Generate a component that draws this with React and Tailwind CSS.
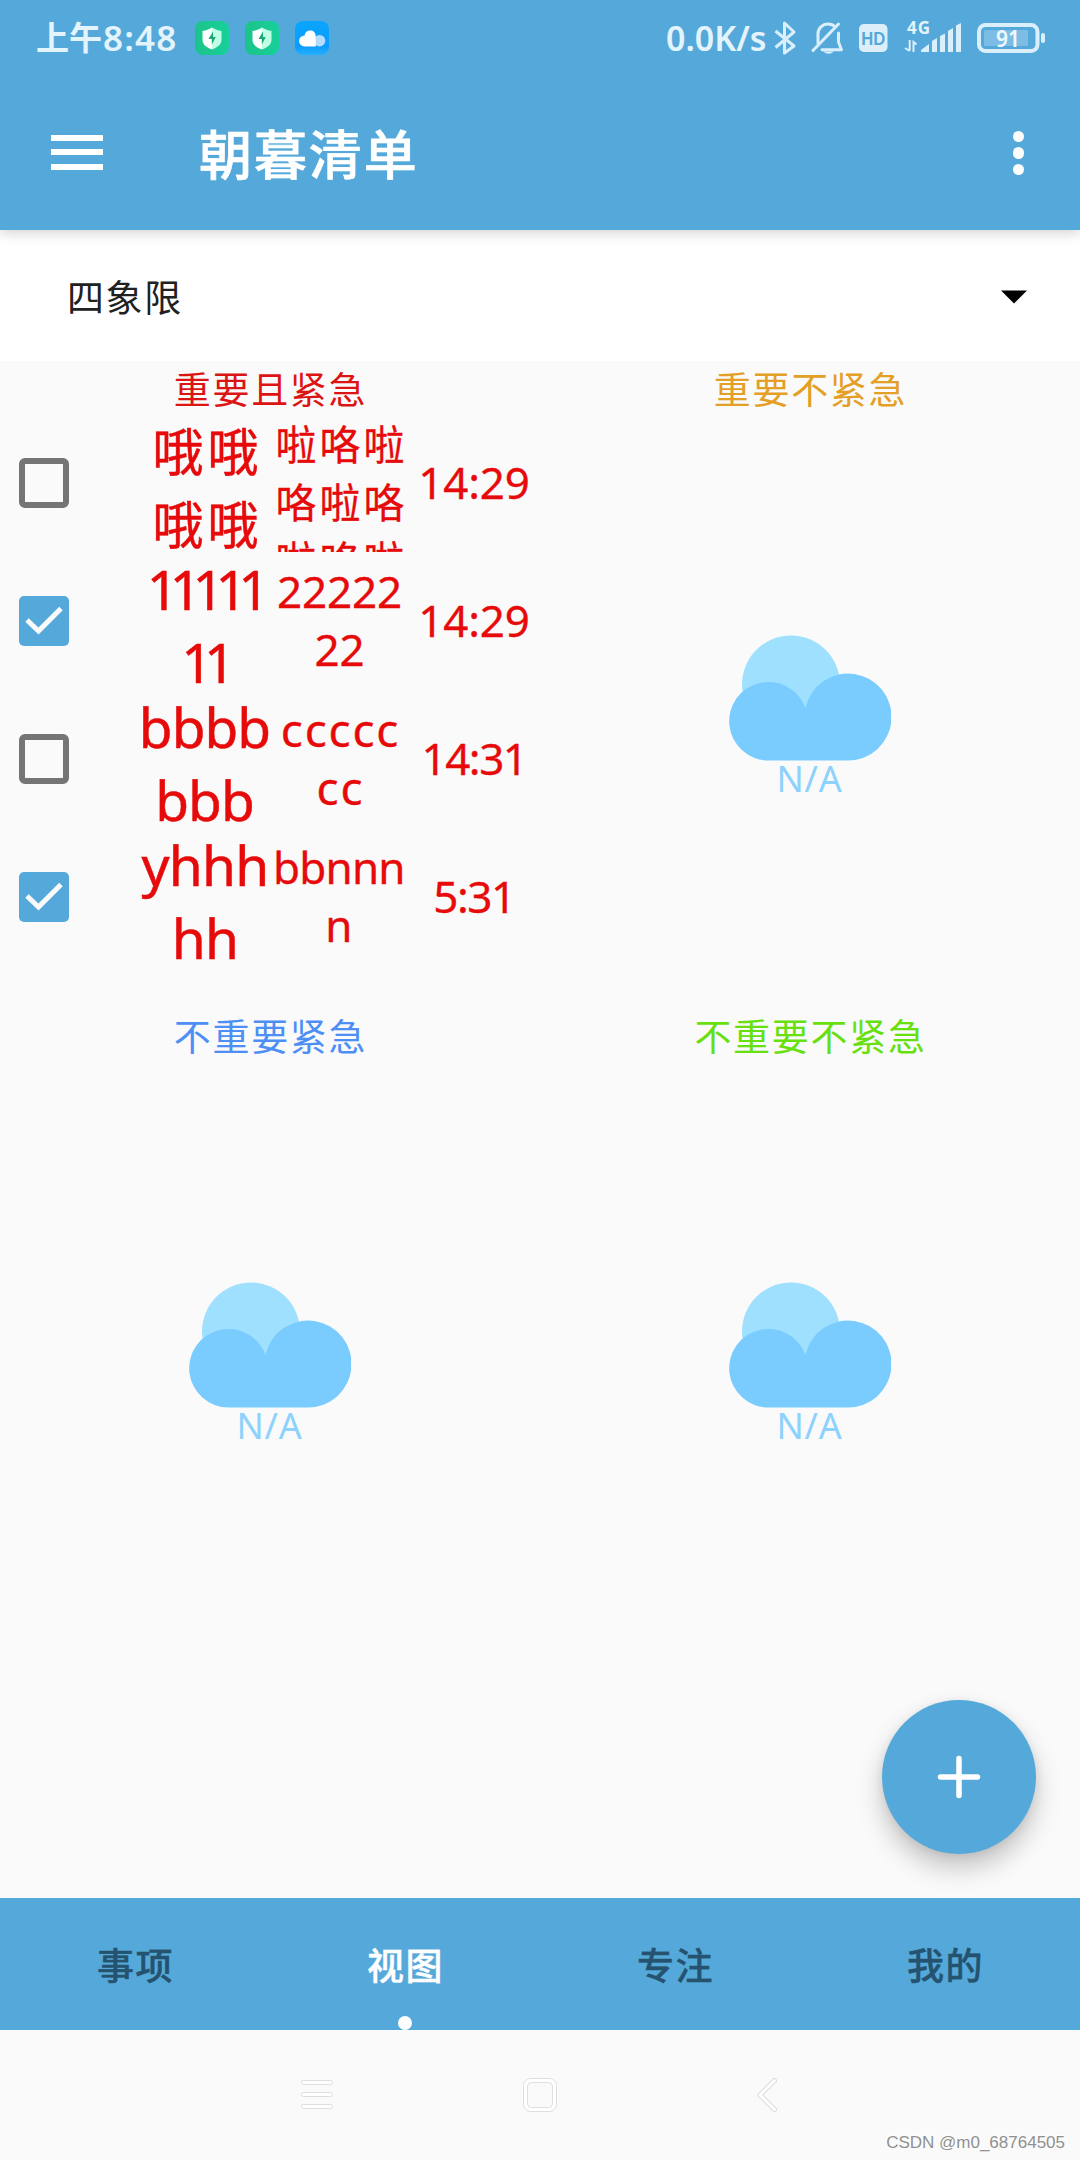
import React from 'react';

const tasks = [
    { done: false, title: '哦哦\n哦哦', titleClass: 'pl-[4px] pt-[1px] text-[51px] tracking-[4px]', note: '啦咯啦\n咯啦咯\n啦咯啦', noteClass: 'pl-[2px] pt-[1px] text-[41px] tracking-[3px]', time: '14:29', timeClass: 'tracking-[-0.2px]' },
    { done: true, title: '11111\n11', titleClass: 'pr-[3px] text-[55px] tracking-[-8.6px]', note: '22222\n22', noteClass: 'pr-[2px] pt-[10px] text-[44px] tracking-[-0.2px]', time: '14:29', timeClass: 'tracking-[-0.2px]' },
    { done: false, title: 'bbbb\nbbb', titleClass: 'pr-[2px] text-[55px] tracking-[-1px]', note: 'ccccc\ncc', noteClass: 'pt-[10px] text-[46px] tracking-[1.8px]', time: '14:31', timeClass: 'tracking-[-1.5px]' },
    { done: true, title: 'yhhh\nhh', titleClass: 'pr-[1px] text-[55px] tracking-[-0.8px]', note: 'bbnnn\nn', noteClass: 'pr-[4px] pt-[10px] text-[44px] tracking-[-0.8px]', time: '5:31', timeClass: 'tracking-[-1.5px]' },
];

const tabs = ['事项', '视图', '专注', '我的'];

function ShieldIcon() {
    return (
        <svg width="34" height="34" viewBox="0 0 34 34">
            <defs>
                <linearGradient id="shieldBg" x1="0" y1="0" x2="1" y2="0">
                    <stop offset="0" stopColor="#1cc38a" />
                    <stop offset="1" stopColor="#17d09a" />
                </linearGradient>
            </defs>
            <rect width="34" height="34" rx="8" fill="url(#shieldBg)" />
            <path d="M17 6.500C14 8.500 11 9.500 7.500 10V19C7.500 23.500 11.500 26.500 17 28.500Z" fill="#fff" />
            <path d="M17 6.500C20 8.500 23 9.500 26.500 10V19C26.500 23.500 22.500 26.500 17 28.500Z" fill="#bfffe4" />
            <path d="M18 10.500L13.500 18H16.800V23.500L20.800 16H18Z" fill="#1aa978" />
        </svg>
    );
}

function CloudAppIcon() {
    return (
        <svg width="34" height="34" viewBox="0 0 34 34">
            <defs>
                <linearGradient id="cloudBg" x1="0" y1="0" x2="0" y2="1">
                    <stop offset="0" stopColor="#0aa5ff" />
                    <stop offset="0.75" stopColor="#0b9cfb" />
                    <stop offset="1" stopColor="#27b0ff" />
                </linearGradient>
            </defs>
            <rect width="34" height="34" rx="8" fill="url(#cloudBg)" />
            <circle cx="24.500" cy="19.700" r="5.800" fill="#b5dcff" />
            <path d="M9.500 25.500A5.500 5.500 0 0 1 9.600 14.500A5.600 5.600 0 0 1 20.500 13.500L20.800 25.500Z" fill="#fff" />
        </svg>
    );
}

function StatusBar() {
    return (
        <div className="flex h-[76px] items-center justify-between pl-[36px] pr-[35px] text-[#e4f4fd]">
            <div className="flex items-center">
                <div className="flex w-[159px] items-center whitespace-nowrap font-semibold leading-[48px]">
                    <span className="text-[33px]">上午</span>
                    <span className="pl-[1px] text-[35px] tracking-[1.200px]">8:48</span>
                </div>
                <div className="flex gap-4">
                    <ShieldIcon />
                    <ShieldIcon />
                    <CloudAppIcon />
                </div>
            </div>
            <div className="flex items-center">
                <span className="w-[108px] whitespace-nowrap text-[34px] font-semibold leading-[48px]">0.0K/s</span>
                <svg width="271" height="36" viewBox="774 20 271 36" fill="none" stroke="#d9effb" strokeWidth="3" className="overflow-visible">
                    <path d="M775.500 31L794 46L784.500 53V23L794 32L775.500 47.500" strokeLinejoin="round" />
                    <g strokeLinecap="round">
                        <path d="M818 43V34A10 10 0 0 1 828 24Q832.500 24 835.500 27M838.500 33V42L841.500 49.700H822" strokeLinejoin="round" />
                        <path d="M813 50.500L838.500 24" />
                    </g>
                    <path d="M823 51.500H834Q828.500 56 823 51.500Z" fill="#d9effb" stroke="none" />
                    <rect x="859" y="24" width="28.500" height="28" rx="5" fill="#dceef9" stroke="none" />
                    <text x="873.200" y="45" textAnchor="middle" fontSize="18.500" fontWeight="700" fill="#55a9da" stroke="none" fontFamily="Liberation Sans, sans-serif" textLength="24" lengthAdjust="spacingAndGlyphs">HD</text>
                    <text x="907" y="34" fontSize="17" fontWeight="700" fill="#e4f4fd" stroke="none" fontFamily="Noto Sans, sans-serif" textLength="23">4G</text>
                    <path d="M909.700 40V50.500M905 48L909.700 51M913.500 52V42L916.500 44.500" strokeWidth="2" />
                    <g fill="#d9effb" stroke="none">
                        <path d="M921 52V50L929 44V52Z" />
                        <path d="M932 52V41L937 38V52Z" />
                        <path d="M940 52V36L945 33.500V52Z" />
                        <path d="M948 52V31L953 28V52Z" />
                        <path d="M956 52V25.500L961 23V52Z" />
                    </g>
                    <rect x="979" y="25" width="58.500" height="26" rx="6.500" strokeWidth="4" />
                    <rect x="984" y="30" width="44" height="16" rx="1.500" fill="#7dbce4" stroke="none" />
                    <rect x="1041" y="33" width="4" height="10" rx="2" fill="#d9effb" stroke="none" />
                    <text x="1008" y="47" textAnchor="middle" fontSize="23" fontWeight="600" fill="#eef9ff" stroke="none" fontFamily="Noto Sans, sans-serif" textLength="24" lengthAdjust="spacingAndGlyphs">91</text>
                </svg>
            </div>
        </div>
    );
}

function Header() {
    return (
        <header className="relative z-10 h-[230px] bg-[#55a9da] shadow-[0_3px_12px_rgba(0,0,0,0.18)]">
            <StatusBar />
            <div className="flex h-[154px] items-center pb-[2px] pl-[51px] pr-[56px]">
                <div className="flex w-[52px] flex-col gap-[8.500px]">
                    <span className="h-[6px] bg-white" />
                    <span className="h-[6px] bg-white" />
                    <span className="h-[6px] bg-white" />
                </div>
                <h1 className="ml-[96px] flex-1 pt-[5px] text-[53px] font-medium leading-[72px] tracking-[1.900px] text-white [-webkit-text-stroke:0.7px_#fff]">朝暮清单</h1>
                <div className="flex flex-col gap-[5px] pt-[2px]">
                    <span className="size-[11.500px] rounded-full bg-white" />
                    <span className="size-[11.500px] rounded-full bg-white" />
                    <span className="size-[11.500px] rounded-full bg-white" />
                </div>
            </div>
        </header>
    );
}

function Checkbox({ checked }) {
    if (!checked) {
        return <span className="size-[50px] rounded-[6px] border-[6px] border-[#757575]" />;
    }
    return (
        <span className="size-[50px] rounded-[5px] bg-[#55a9da]">
            <svg width="50" height="50" viewBox="0 0 50 50" fill="none" stroke="#fafafa" strokeWidth="5">
                <path d="M8 24L19.500 35L42 12.500" />
            </svg>
        </span>
    );
}

function TaskRow({ task }) {
    return (
        <div className="flex h-[138px] items-center pl-[19px] text-center text-[#e60a0a]">
            <div className="flex w-[119px]">
                <Checkbox checked={task.done} />
            </div>
            <div className={`h-[138px] w-[135px] whitespace-pre leading-[73px] [-webkit-text-stroke:0.5px_#e60a0a] ${task.titleClass}`}>{task.title}</div>
            <div className={`h-[138px] w-[135px] overflow-hidden whitespace-pre leading-[58px] [-webkit-text-stroke:0.3px_#e60a0a] ${task.noteClass}`}>{task.note}</div>
            <div className={`w-[132px] pb-[2px] text-[44px] leading-[58px] [-webkit-text-stroke:0.3px_#e60a0a] ${task.timeClass}`}>{task.time}</div>
        </div>
    );
}

function EmptyCloud() {
    return (
        <div className="flex flex-col items-center pt-[220.500px]">
            <svg width="162" height="126" viewBox="0 0 162 126">
                <circle cx="62" cy="49.500" r="49" fill="#a0e0ff" />
                <path d="M39.500 125.500A39.300 39.300 0 1 1 76.500 73A43.500 43.500 0 1 1 118.500 125.500Z" fill="#7accff" />
            </svg>
            <span className="-mt-[2px] pr-[1px] text-[36px] leading-[40px] tracking-[0.800px] text-[#8dd2fd]">N/A</span>
        </div>
    );
}

function Quadrant({ title, color, children }) {
    return (
        <section className="h-[647px]">
            <h2 className={`h-[53px] pl-[1px] pt-[3px] text-center text-[37px] leading-[52px] tracking-[1.700px] ${color}`}>{title}</h2>
            {children}
        </section>
    );
}

function TabBar() {
    return (
        <nav className="grid h-[132px] grid-cols-4 bg-[#55a9da]">
            {tabs.map((tab) => (
                <div
                    key={tab}
                    className={`relative flex items-center justify-center pl-[1px] pt-[3px] text-[37px] font-medium tracking-[1.600px] [-webkit-text-stroke:0.4px] ${tab === '视图' ? 'text-white' : 'text-[#25526e]'}`}
                >
                    {tab}
                    {tab === '视图' && <span className="absolute bottom-0 left-[128px] size-[14px] rounded-full bg-white" />}
                </div>
            ))}
        </nav>
    );
}

function SystemNav() {
    return (
        <footer className="relative flex h-[130px] items-center pl-[300px]">
            <svg width="34" height="36" viewBox="0 0 34 36" fill="#fff" stroke="#dedede" strokeWidth="1">
                <rect x="1.500" y="3.500" width="31" height="4" rx="2" />
                <rect x="1.500" y="15.500" width="31" height="4" rx="2" />
                <rect x="1.500" y="27.500" width="31" height="4" rx="2" />
            </svg>
            <svg width="36" height="36" viewBox="0 0 36 36" fill="#fff" stroke="#dedede" strokeWidth="1" className="ml-[188px]">
                <rect x="1.500" y="1.500" width="33" height="33" rx="7" />
                <rect x="5.500" y="5.500" width="25" height="25" rx="4" fill="#fafafa" />
            </svg>
            <svg width="22" height="36" viewBox="0 0 22 36" fill="none" strokeLinecap="round" strokeLinejoin="round" className="ml-[198px]">
                <path d="M18.500 3.500L4 18L18.500 32.500" stroke="#dcdcdc" strokeWidth="5" />
                <path d="M18.500 3.500L4 18L18.500 32.500" stroke="#fff" strokeWidth="3" />
            </svg>
            <span className="absolute bottom-[5px] right-[15px] font-['Liberation_Sans'] text-[17px] leading-[24px] text-[#909090] [text-shadow:-1px_-1px_0_#fff]">CSDN @m0_68764505</span>
        </footer>
    );
}

function App() {
    return (
        <div className="flex h-[2160px] w-[1080px] flex-col overflow-hidden bg-[#fafafa] font-['Noto_Sans','Noto_Sans_CJK_SC',sans-serif]">
            <Header />
            <div className="flex h-[131px] items-center justify-between bg-white pl-[67px] pr-[53px]">
                <span className="pt-[4px] text-[37px] leading-[52px] tracking-[1.600px] text-[#212121]">四象限</span>
                <svg width="26" height="14" viewBox="0 0 26 14" className="mt-[3px]">
                    <path d="M0 0.500H26L13 13.500Z" fill="#000" />
                </svg>
            </div>
            <main className="relative h-[1537px]">
                <div className="grid grid-cols-2">
                    <Quadrant title="重要且紧急" color="text-[#dc1414]">
                        {tasks.map((task, i) => (
                            <TaskRow key={i} task={task} />
                        ))}
                    </Quadrant>
                    <Quadrant title="重要不紧急" color="text-[#e39f26]">
                        <EmptyCloud />
                    </Quadrant>
                    <Quadrant title="不重要紧急" color="text-[#4d8ff5]">
                        <EmptyCloud />
                    </Quadrant>
                    <Quadrant title="不重要不紧急" color="text-[#68e010]">
                        <EmptyCloud />
                    </Quadrant>
                </div>
                <button className="absolute bottom-[44px] right-[44px] flex size-[154px] items-center justify-center rounded-full bg-[#55a9da] shadow-[0_14px_26px_rgba(0,0,0,0.22),0_2px_10px_rgba(0,0,0,0.08)]">
                    <svg width="44" height="44" viewBox="0 0 44 44" stroke="#fff" strokeWidth="5.500" strokeLinecap="round">
                        <path d="M22 3.500V40.500M3.500 22H40.500" />
                    </svg>
                </button>
            </main>
            <TabBar />
            <SystemNav />
        </div>
    );
}

export default App;
